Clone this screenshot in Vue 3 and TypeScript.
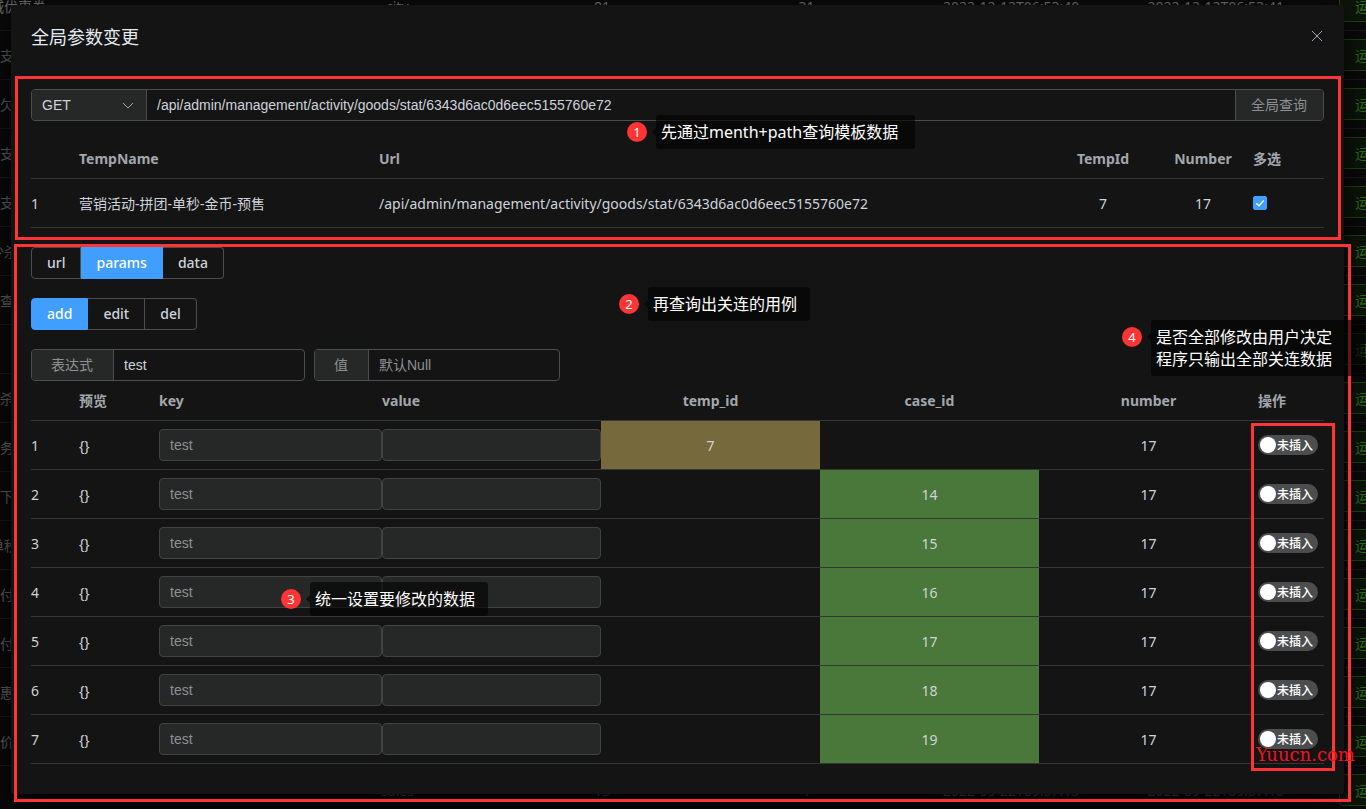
<script setup lang="ts">
import { ref } from 'vue'

interface BackRow {
  name: string
  wide?: boolean
  cells: string[]
}

const blank = ['', '', '', '', '']
const backRows: BackRow[] = [
  { name: '城优惠券', wide: true, cells: ['city', '81', '31', '2022-12-12T06:53:40', '2022-12-12T06:53:41'] },
  { name: '支', cells: blank },
  { name: '欠', cells: blank },
  { name: '支', cells: blank },
  { name: '支', cells: blank },
  { name: '少杀', wide: true, cells: blank },
  { name: '查', cells: blank },
  { name: '', cells: blank },
  { name: '杀', cells: blank },
  { name: '务', cells: blank },
  { name: '下', cells: blank },
  { name: '单秒', wide: true, cells: blank },
  { name: '付', cells: blank },
  { name: '付', cells: blank },
  { name: '惠', cells: blank },
  { name: '价', cells: blank },
  { name: '', cells: ['sales', '15', '1', '2022-09-22T09:57:15', '2022-09-22T09:57:16'] },
]

const apiPath = ref('/api/admin/management/activity/goods/stat/6343d6ac0d6eec5155760e72')
const method = ref('GET')
const picked = ref(true)

const targets = ['url', 'params', 'data']
const target = ref('params')
const actions = ['add', 'edit', 'del']
const action = ref('add')
const expression = ref('test')
const value = ref('')

interface CaseRow {
  tempId?: number
  caseId?: number
  number: number
  on: boolean
}

const rows = ref<CaseRow[]>([
  { tempId: 7, number: 17, on: false },
  { caseId: 14, number: 17, on: false },
  { caseId: 15, number: 17, on: false },
  { caseId: 16, number: 17, on: false },
  { caseId: 17, number: 17, on: false },
  { caseId: 18, number: 17, on: false },
  { caseId: 19, number: 17, on: false },
])

const notes = [
  { id: 1, lines: ['先通过menth+path查询模板数据'] },
  { id: 2, lines: ['再查询出关连的用例'] },
  { id: 3, lines: ['统一设置要修改的数据'] },
  { id: 4, lines: ['是否全部修改由用户决定', '程序只输出全部关连数据'] },
]
</script>

<template>
  <div class="page">
    <div class="backdrop">
      <div class="back-list">
        <div v-for="(row, i) in backRows" :key="i" class="back-row">
          <span class="back-name" :class="{ wide: row.wide }">{{ row.name }}</span>
          <span v-for="(cell, j) in row.cells" :key="j" class="back-cell">{{ cell }}</span>
          <button type="button" class="back-run">运</button>
        </div>
      </div>
    </div>

    <section class="dialog" role="dialog" aria-labelledby="dialog-title">
      <header class="dialog-head">
        <h1 id="dialog-title">全局参数变更</h1>
        <button type="button" class="close" aria-label="关闭">
          <svg viewBox="0 0 12 12" width="12" height="12"><path d="M1 1L11 11M11 1L1 11" /></svg>
        </button>
      </header>

      <div class="query">
        <div class="method">
          <select v-model="method" aria-label="method">
            <option>GET</option>
          </select>
          <svg viewBox="0 0 12 12" width="12" height="12"><path d="M1 4L6 9L11 4" /></svg>
        </div>
        <input v-model="apiPath" class="path" type="text" aria-label="path" />
        <button type="button" class="search">全局查询</button>
      </div>

      <table class="grid templates">
        <colgroup>
          <col class="c-index" /><col class="c-name" /><col /><col class="c-num" /><col class="c-num" /><col class="c-pick" />
        </colgroup>
        <thead>
          <tr><th></th><th>TempName</th><th>Url</th><th class="mid">TempId</th><th class="mid">Number</th><th>多选</th></tr>
        </thead>
        <tbody>
          <tr>
            <td>1</td>
            <td>营销活动-拼团-单秒-金币-预售</td>
            <td>{{ apiPath }}</td>
            <td class="mid">7</td>
            <td class="mid">17</td>
            <td>
              <span class="check">
                <input v-model="picked" type="checkbox" aria-label="多选" />
                <svg v-if="picked" viewBox="0 0 14 14" width="14" height="14"><path d="M3.2 7.2L6 9.8L10.8 4.4" /></svg>
              </span>
            </td>
          </tr>
        </tbody>
      </table>

      <div class="segments">
        <button v-for="t in targets" :key="t" type="button" :class="{ on: t === target }" @click="target = t">{{ t }}</button>
      </div>
      <div class="segments">
        <button v-for="a in actions" :key="a" type="button" :class="{ on: a === action }" @click="action = a">{{ a }}</button>
      </div>

      <div class="fields">
        <div class="field">
          <label for="expression">表达式</label>
          <input id="expression" v-model="expression" type="text" />
        </div>
        <div class="field">
          <label for="value">值</label>
          <input id="value" v-model="value" type="text" placeholder="默认Null" />
        </div>
      </div>

      <table class="grid cases">
        <colgroup>
          <col class="c-index" /><col class="c-view" /><col class="c-key" /><col /><col /><col /><col /><col class="c-op" />
        </colgroup>
        <thead>
          <tr>
            <th></th><th>预览</th><th>key</th><th>value</th>
            <th class="mid">temp_id</th><th class="mid">case_id</th><th class="mid">number</th><th>操作</th>
          </tr>
        </thead>
        <tbody>
          <tr v-for="(row, i) in rows" :key="i">
            <td>{{ i + 1 }}</td>
            <td>{}</td>
            <td><input class="locked" type="text" placeholder="test" aria-label="key" disabled /></td>
            <td><input class="locked" type="text" aria-label="value" disabled /></td>
            <td class="mid" :class="{ temp: row.tempId }">{{ row.tempId }}</td>
            <td class="mid" :class="{ case: row.caseId }">{{ row.caseId }}</td>
            <td class="mid">{{ row.number }}</td>
            <td>
              <label class="switch">
                <input v-model="row.on" type="checkbox" />
                <span>未插入</span>
              </label>
            </td>
          </tr>
        </tbody>
      </table>
    </section>

    <div class="mark mark-query"></div>
    <div class="mark mark-cases"></div>
    <div class="mark mark-switches"></div>

    <div v-for="note in notes" :key="note.id" class="note" :class="`note-${note.id}`">
      <span class="dot">{{ note.id }}</span>
      <p class="bubble"><span v-for="line in note.lines" :key="line">{{ line }}</span></p>
    </div>

    <span class="stamp">Yuucn.com</span>
  </div>
</template>

<style>
body {
  margin: 0;
  background: #060606;
}
</style>

<style scoped>
.page {
  position: relative;
  display: flow-root;
  min-height: 100vh;
  overflow: hidden;
  font: 14px/23px 'Noto Sans', 'Noto Sans CJK SC', sans-serif;
  color: #cfd3dc;
}
.page *,
.page *::before {
  box-sizing: border-box;
}
button,
input,
select {
  font: inherit;
  color: inherit;
  margin: 0;
}
input {
  font-family: 'Liberation Sans', 'Noto Sans CJK SC', sans-serif;
}
button {
  cursor: pointer;
}

/* dimmed list behind the dialog */
.backdrop {
  position: absolute;
  inset: 0;
  overflow: hidden;
  background: #0a0a0a;
}
.back-list {
  margin-top: -18px;
}
.back-row {
  display: grid;
  grid-template-columns: 295px repeat(5, 1fr) 48px;
  align-items: center;
  height: 49px;
  border-bottom: 1px solid #1c1c1c;
  color: #68696b;
  white-space: nowrap;
}
.back-name.wide {
  margin-left: -10px;
}
.back-cell {
  text-align: center;
}
.back-run {
  height: 32px;
  width: 60px;
  margin-left: 21px;
  padding: 0 15px;
  text-align: left;
  color: #34701f;
  background: #0d160a;
  border: 1px solid #234716;
  border-radius: 4px;
}

/* dialog */
.dialog {
  position: relative;
  margin: 5px 22px 15px 11px;
  padding: 20px 20px 30px;
  background: #141414;
  border-radius: 2px;
  box-shadow: 0 16px 32px 2px rgba(0, 0, 0, 0.8);
}
.dialog-head {
  display: flex;
  justify-content: space-between;
  align-items: center;
  height: 24px;
  margin-bottom: 40px;
}
h1 {
  margin: 0;
  font-size: 18px;
  line-height: 24px;
  font-weight: 400;
  color: #e5eaf3;
}
.close {
  display: flex;
  padding: 0 1px 2px 0;
  background: none;
  border: 0;
}
svg path {
  fill: none;
  stroke: #a3a6ad;
  stroke-width: 1;
}

.query {
  display: flex;
  height: 32px;
  margin-bottom: 18px;
  border: 1px solid #4c4d4f;
  border-radius: 4px;
  font-family: 'Liberation Sans', 'Noto Sans CJK SC', sans-serif;
}
.method {
  display: flex;
  align-items: center;
  width: 115px;
  padding-right: 12px;
  background: #262727;
  border-right: 1px solid #4c4d4f;
  border-radius: 3px 0 0 3px;
}
.method select {
  flex: 1;
  min-width: 0;
  height: 30px;
  padding: 0 0 0 10px;
  appearance: none;
  background: none;
  border: 0;
}
.path {
  flex: 1;
  min-width: 0;
  padding: 0 10px;
  background: none;
  border: 0;
}
.search {
  padding: 0 16px 0 15px;
  color: #8d9095;
  background: #262727;
  border: 0;
  border-left: 1px solid #4c4d4f;
  border-radius: 0 3px 3px 0;
}

/* tables */
.grid {
  width: 100%;
  table-layout: fixed;
  border-collapse: separate;
  border-spacing: 0;
}
.grid th,
.grid td {
  height: 49px;
  padding: 0;
  text-align: left;
  border-bottom: 1px solid #363637;
  white-space: nowrap;
}
.grid th {
  height: 40px;
  font-weight: 700;
  color: #a3a6ad;
}
.grid .mid {
  text-align: center;
}
.templates {
  margin-bottom: 19px;
}
.c-index {
  width: 48px;
}
.c-name {
  width: 300px;
}
.c-num {
  width: 100px;
}
.c-pick {
  width: 71px;
}
.c-view {
  width: 80px;
}
.c-key {
  width: 223px;
}
.c-op {
  width: 66px;
}
.temp {
  background: #76693c;
}
.case {
  background: #49783a;
}
.check {
  display: grid;
  width: 14px;
  height: 14px;
}
.check > * {
  grid-area: 1 / 1;
}
.check input {
  width: 14px;
  height: 14px;
  appearance: none;
  border: 1px solid #4c4d4f;
  border-radius: 2px;
}
.check input:checked {
  background: #409eff;
  border-color: #409eff;
}
.check svg {
  z-index: 1;
  pointer-events: none;
}
.check path {
  stroke: #fff;
  stroke-width: 1.3;
}

.segments {
  display: flex;
  height: 32px;
  margin-bottom: 19px;
}
.segments button {
  padding: 0 15px 2px;
  font-weight: 500;
  background: none;
  border: 1px solid #4c4d4f;
  border-left-width: 0;
}
.segments button:first-child {
  border-left-width: 1px;
  border-radius: 4px 0 0 4px;
}
.segments button:last-child {
  border-radius: 0 4px 4px 0;
}
.segments .on {
  color: #fff;
  background: #409eff;
  border-color: #409eff;
}

.fields {
  display: flex;
  gap: 9px;
}
.field {
  display: flex;
  height: 32px;
  border: 1px solid #4c4d4f;
  border-radius: 4px;
}
.field label {
  padding: 0 20px 0 19px;
  line-height: 30px;
  color: #8d9095;
  background: #262727;
  border-right: 1px solid #4c4d4f;
  border-radius: 3px 0 0 3px;
}
.field input {
  width: 190px;
  padding: 0 10px;
  background: none;
  border: 0;
}
input::placeholder {
  color: #8d9095;
  opacity: 1;
}
.locked {
  display: block;
  width: 100%;
  height: 32px;
  padding: 0 10px;
  background: #262727;
  border: 1px solid #414243;
  border-radius: 4px;
}

.switch {
  display: flex;
  align-items: center;
  gap: 1px;
  width: 60px;
  height: 20px;
  padding-left: 2px;
  font-size: 12px;
  font-weight: 500;
  color: #fff;
  background: #4c4d4f;
  border-radius: 10px;
}
.switch span {
  padding-top: 2px;
  line-height: 20px;
}
.switch input {
  width: 16px;
  height: 16px;
  appearance: none;
  background: #fff;
  border-radius: 8px;
}

/* markers and notes lying over the page */
.mark {
  position: absolute;
  border: 3px solid #ff3434;
  pointer-events: none;
}
.mark-query {
  top: 76px;
  left: 15px;
  right: 25px;
  height: 164px;
}
.mark-cases {
  top: 244px;
  left: 14px;
  right: 15px;
  height: 558px;
}
.mark-switches {
  top: 423px;
  right: 31px;
  width: 84px;
  height: 348px;
}
.note {
  position: absolute;
  display: flex;
  align-items: flex-start;
  gap: 9px;
  margin-left: -10px;
  color: #fff;
}
.note-1 {
  top: 115px;
  left: 637px;
}
.note-2 {
  top: 287px;
  left: 629px;
}
.note-3 {
  top: 582px;
  left: 291px;
}
.note-4 {
  top: 320px;
  left: 1132px;
}
.dot {
  width: 20px;
  height: 20px;
  margin-top: 7px;
  font-size: 13px;
  line-height: 20px;
  text-align: center;
  background: #ff3434;
  border-radius: 50%;
}
.bubble {
  position: relative;
  display: flex;
  flex-direction: column;
  margin: 0;
  padding: 6px 13px 6px 5px;
  font-size: 16px;
  line-height: 22px;
  white-space: nowrap;
  background: rgba(0, 0, 0, 0.6);
  border-radius: 3px;
}
.bubble::before {
  content: '';
  position: absolute;
  top: 13px;
  left: -4px;
  border: 4px solid transparent;
  border-left-width: 0;
  border-right-color: rgba(0, 0, 0, 0.6);
}
.note-1 .bubble {
  width: 259px;
}
.note-4 .bubble {
  width: 214px;
}
.stamp {
  position: absolute;
  top: 743px;
  left: 1256px;
  font-family: 'DejaVu Serif', serif;
  font-size: 18px;
  line-height: 24px;
  color: #f01020;
}
</style>
